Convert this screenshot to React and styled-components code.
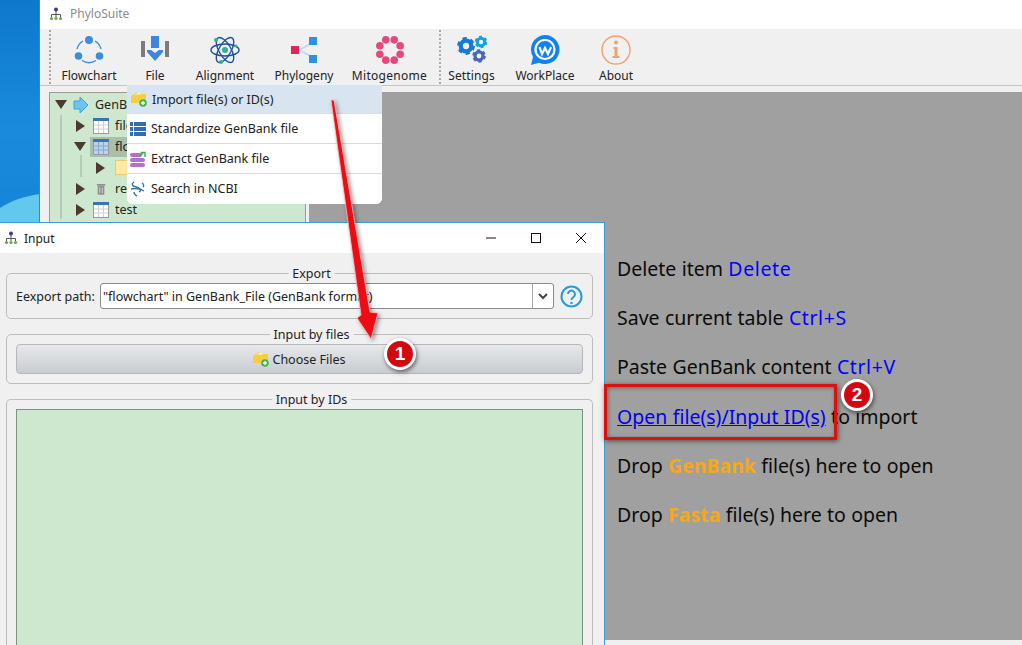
import React from "react";
import styled, { createGlobalStyle } from "styled-components";

const Global = createGlobalStyle`
  html, body { margin: 0; padding: 0; width: 1022px; height: 645px; overflow: hidden; background: #1a7fd0; }
  * { box-sizing: border-box; }
  body { font-family: "Noto Sans", "Open Sans", "Liberation Sans", sans-serif; }
`;

const Desktop = styled.div`
  position: relative; width: 1022px; height: 645px; overflow: hidden;
  background: linear-gradient(180deg, #0f78cc 0%, #1a8bdc 20%, #1585d8 32%, #2a9fe8 100%);
`;
const Wave = styled.svg`
  position: absolute; left: 0; top: 190px;
`;
const MainWindow = styled.div`
  position: absolute; left: 39px; top: 0; width: 983px; height: 645px;
  display: flex; flex-direction: column; background: #f0f0f0; border-left: 1px solid #5b7d9b;
`;
const TitleBar = styled.div`
  height: 29px; flex: none; background: #fff; display: flex; align-items: center;
  gap: 7px; padding: 0 0 2px 9px; font-size: 12px; color: #8a8a8a;
`;
const Toolbar = styled.div`
  height: 57px; flex: none; display: flex; background: #f0f0f0;
  border-bottom: 1px solid #c4c4c4; position: relative;
`;
const Grip = styled.div`
  flex: none; width: 2px; height: 54px; margin: 1px 0 0 ${p => p.$ml}px;
  background: repeating-linear-gradient(180deg, #a8a8a8 0 2px, transparent 2px 4px);
`;
const Tool = styled.div`
  flex: none; width: ${p => p.$w}px; display: flex; flex-direction: column; align-items: center;
  padding-top: 6px; font-size: 12px; color: #222; white-space: nowrap; line-height: 16px;
  letter-spacing: ${p => p.$ls || 0}px;
  svg { display: block; margin-bottom: 3px; height: 30px; }
`;
const Workspace = styled.div`
  flex: 1; display: flex; background: #f0f0f0; padding: 6px 0 5px 9px;
`;
const TreePanel = styled.div`
  width: 257px; height: 140px; flex: none; background-color: #cde8cf; border: 1px solid #9a9a9a;
  margin-right: 3px; padding-top: 1px; font-size: 12.5px; color: #222;
  background-image: linear-gradient(#b5c9b7, #b5c9b7), linear-gradient(#b5c9b7, #b5c9b7);
  background-repeat: no-repeat;
  background-size: 2px 104px, 2px 22px;
  background-position: 10px 22px, 30px 62px;
`;
const TreeRow = styled.div`
  height: 21px; display: flex; align-items: center; padding-left: ${p => p.$indent}px; gap: ${p => p.$gap ?? 6}px; white-space: nowrap;
`;
const Selected = styled.span`
  display: flex; align-items: center; gap: 6px; background: #a8bfac; height: 20px; padding: 0 30px 0 3px; margin-left: -2px;
`;
const Arrow = styled.i`
  display: block; width: 0; height: 0; flex: none;
  ${p => p.$open
    ? "border-left: 6px solid transparent; border-right: 6px solid transparent; border-top: 9px solid #4d3a2d;"
    : "border-top: 6.500px solid transparent; border-bottom: 6.500px solid transparent; border-left: 9px solid #4d3a2d; margin: 0 2px 0 1px;"}
`;
const TrashSlot = styled.span`
  width: 16px; display: flex; justify-content: center; flex: none;
`;
const Note = styled.span`
  display: block; width: 16px; height: 15px; margin-left: 2px; background: #ffe9a0; border: 1px solid #e8c97a;
`;
const Stage = styled.div`
  flex: 1; background: #a0a0a0; position: relative;
`;
const Hints = styled.div`
  position: absolute; left: 308px; top: 164px; display: flex; flex-direction: column; gap: 23.2px;
  font-size: 19.500px; line-height: 26px; color: #0a0a0a; white-space: nowrap; word-spacing: 0.3px;
`;
const Key = styled.span` color: #0000ff; letter-spacing: 0.6px; `;
const HintLink = styled.span` color: #0000ee; text-decoration: underline; `;
const Accent = styled.b` color: #f5a81c; `;

const Menu = styled.div`
  position: absolute; left: 127px; top: 85px; width: 255px; height: 119px; background: #fff;
  border-radius: 0 0 6px 6px; font-size: 12.500px; color: #222; overflow: hidden;
`;
const MenuItem = styled.div`
  height: 30px; display: flex; align-items: center; gap: 5px; padding-left: ${p => p.$first ? 4 : 3}px;
  background: ${p => p.$active ? "#d8e5f1" : "#fff"};
  border-bottom: 1px solid ${p => p.$last ? "transparent" : "#dcdcdc"};
  ${p => p.$first && "height: 29px;"}
  svg { flex: none; }
`;

const Dialog = styled.div`
  position: absolute; left: 0; top: 222px; width: 605px; height: 423px;
  background: #f0f0f0; border: 1px solid #3f9ad6; border-left: none; border-bottom: none;
  display: flex; flex-direction: column;
`;
const DialogBar = styled.div`
  height: 30px; flex: none; background: #fff; display: flex; align-items: center; padding-left: 4px;
  gap: 6px; font-size: 12px; color: #222;
`;
const WinButtons = styled.div`
  margin-left: auto; display: flex; align-items: center; gap: 33px; padding-right: 17px; color: #111;
`;
const DialogBody = styled.div`
  flex: 1; padding: 20px 11px 0 6px; display: flex; flex-direction: column; gap: 15px;
`;
const Group = styled.div`
  border: 1px solid #bdbdbd; border-radius: 5px; padding: ${p => p.$pad}; position: relative;
  ${p => p.$grow ? "flex: 1; border-bottom: none; border-radius: 5px 5px 0 0;" : ""}
  ${p => p.$h ? `height: ${p.$h}px; flex: none;` : ""}
`;
const Legend = styled.span`
  position: absolute; top: -8px; left: calc(50% + 12px); transform: translateX(-50%); background: #f0f0f0;
  padding: 0 4px; font-size: 12.500px; line-height: 15px; color: #222; white-space: nowrap;
`;
const PathRow = styled.div` display: flex; align-items: center; font-size: 12.500px; color: #222; `;
const PathLabel = styled.span` width: 84px; flex: none; white-space: nowrap; `;
const Combo = styled.div`
  width: 455px; height: 26px; background: #fff; border: 1px solid #8a8a8a; border-radius: 3px;
  display: flex; align-items: center; padding-left: 2px; white-space: nowrap; overflow: hidden;
`;
const ComboText = styled.span` flex: 1; overflow: hidden; `;
const ComboArrow = styled.span`
  width: 21px; height: 100%; border-left: 1px solid #a8a8a8; display: flex; align-items: center; justify-content: center; flex: none;
`;
const HelpButton = styled.span` margin-left: 6px; display: flex; `;
const ChooseButton = styled.div`
  height: 30px; border: 1px solid #b4b8bc; border-radius: 4px;
  background: linear-gradient(180deg, #e6e8ea 0%, #c8ccd2 100%);
  display: flex; align-items: center; justify-content: center; gap: 3px; font-size: 12.500px; color: #222;
`;
const IdBox = styled.div`
  height: 100%; background: #cde8cf; border: 1px solid #7f8f80; border-bottom: none;
`;
const BottomStrip = styled.div`
  position: absolute; left: 605px; right: 0; top: 640px; height: 5px; background: #f0f0f0;
`;
const Overlay = styled.svg`
  position: absolute; left: 0; top: 0; pointer-events: none;
  filter: drop-shadow(2px 2px 2px rgba(0,0,0,.4));
`;
const Badge = styled.span`
  position: absolute; left: ${p => p.$x}px; top: ${p => p.$y}px; width: 32px; height: 32px; border-radius: 50%;
  background: #d4080f; border: 3px solid #fff; color: #fff; font: bold 19px/25px "Liberation Sans", sans-serif;
  text-align: center; box-shadow: 1px 2px 4px rgba(0,0,0,.55);
`;
const Callout = styled.div`
  position: absolute; left: 604px; top: 384px; width: 233px; height: 56px;
  border: 3px solid #dd1010; box-shadow: 1px 1px 5px rgba(0,0,0,.55), inset 1px 1px 4px rgba(0,0,0,.35);
`;

const Logo = () => (
  <svg width="14" height="14" viewBox="0 0 14 14">
    <circle cx="7" cy="2.4" r="2" fill="#3a3a8c" />
    <path d="M7 4v4M2.500 10V7.500h9V10M7 7.500V10" stroke="#555" strokeWidth="1" fill="none" />
    <circle cx="2.500" cy="11.500" r="1.600" fill="#6aa84f" />
    <circle cx="7" cy="11.500" r="1.600" fill="#6aa84f" />
    <circle cx="11.500" cy="11.500" r="1.600" fill="#6aa84f" />
  </svg>
);
const FlowIcon = () => (
  <svg width="30" height="30" viewBox="0 0 30 30">
    <path d="M9 6A13 13 0 0 0 3 14M21 6a13 13 0 0 1 6 8M8 25.500a13 13 0 0 0 14 0" fill="none" stroke="#3a8ee0" strokeWidth="1.400" />
    <circle cx="15" cy="5" r="4" fill="#3a8ee0" /><circle cx="4.500" cy="21" r="3.800" fill="#3a8ee0" /><circle cx="25.500" cy="21" r="3.800" fill="#3a8ee0" />
  </svg>
);
const FileIcon = () => (
  <svg width="30" height="30" viewBox="0 0 30 30">
    <rect x="1" y="6" width="4" height="16" fill="#7b7b7b" /><rect x="25" y="6" width="4" height="16" fill="#7b7b7b" />
    <rect x="11" y="1" width="8" height="12" fill="#3a86e0" />
    <path d="M7 15h4l4 3 4-3h4v2l-8 9-8-9z" fill="#3a86e0" />
  </svg>
);
const AtomIcon = () => (
  <svg width="30" height="30" viewBox="0 0 30 30" fill="none" stroke="#1e4f9c" strokeWidth="1.400">
    <ellipse cx="15" cy="15" rx="14" ry="6" /><ellipse cx="15" cy="15" rx="14" ry="6" transform="rotate(60 15 15)" /><ellipse cx="15" cy="15" rx="14" ry="6" transform="rotate(120 15 15)" />
    <circle cx="15" cy="15" r="3" fill="#28b48c" stroke="none" /><circle cx="6" cy="5" r="2" fill="#28b48c" stroke="none" /><circle cx="26" cy="11" r="1.600" fill="#28b48c" stroke="none" /><circle cx="11" cy="27" r="2" fill="#28b48c" stroke="none" />
  </svg>
);
const PhyloIcon = () => (
  <svg width="30" height="30" viewBox="0 0 30 30">
    <path d="M9 15L24 6v3L12 15l12 6v3z" fill="#bcdcf5" />
    <rect x="2" y="11" width="8" height="8" fill="#e0245e" /><rect x="20" y="2" width="8" height="8" fill="#2f8fe6" /><rect x="20" y="20" width="8" height="8" fill="#2f8fe6" />
  </svg>
);
const MitoIcon = () => (
  <svg width="30" height="30" viewBox="0 0 30 30" fill="#e5497c">
    {[0, 45, 90, 135, 180, 225, 270, 315].map(a => (
      <circle key={a} cx={15 + 11 * Math.cos((a + 22.5) * Math.PI / 180)} cy={15 + 11 * Math.sin((a + 22.5) * Math.PI / 180)} r="3.800" />
    ))}
  </svg>
);
const Gear = ({ cx, cy, r, color }) => (
  <g>
    <circle cx={cx} cy={cy} r={r * 0.62} fill="none" stroke={color} strokeWidth={r * 0.5} />
    <circle cx={cx} cy={cy} r={r * 0.9} fill="none" stroke={color} strokeWidth={r * 0.3} strokeDasharray={`${r * 0.5} ${r * 0.45}`} />
  </g>
);
const GearsIcon = () => (
  <svg width="30" height="30" viewBox="0 0 30 30">
    <Gear cx={9} cy={11} r={8.500} color="#1679d6" /><Gear cx={24} cy={7} r={6} color="#17a2d8" /><Gear cx={22} cy={21} r={6.500} color="#4a67b8" />
  </svg>
);
const WorkIcon = () => (
  <svg width="30" height="30" viewBox="0 0 30 30">
    <path d="M15 0a14.500 14.500 0 1 1-6 27.700L1 30l2-8A14.500 14.500 0 0 1 15 0z" fill="#1282f0" />
    <circle cx="15" cy="14.500" r="9.500" fill="none" stroke="#fff" strokeWidth="2.200" />
    <path d="M9.500 12l2.500 7 3-6 3 6 3-7" fill="none" stroke="#fff" strokeWidth="2.200" />
  </svg>
);
const InfoIcon = () => (
  <svg width="30" height="30" viewBox="0 0 30 30">
    <circle cx="15" cy="15" r="14" fill="none" stroke="#f3a070" strokeWidth="1.400" />
    <circle cx="15" cy="7.500" r="2" fill="#f3a070" />
    <path d="M12.500 12h4v9h2v2h-7v-2h2v-7h-1z" fill="#f3a070" />
  </svg>
);
const Folder = () => (
  <svg width="16" height="16" viewBox="0 0 16 16">
    <path d="M0 5l6-4 1.500 2H15v9H0z" fill="#f4cf45" />
    <path d="M3 3.500l5-2 2 2z" fill="#fff6c8" />
    <circle cx="12" cy="12" r="3.800" fill="#47b54a" /><path d="M12 10v4M10 12h4" stroke="#fff" strokeWidth="1.300" />
  </svg>
);
const ListIcon = () => (
  <svg width="16" height="16" viewBox="0 0 16 16" fill="#2f6fb0">
    <rect x="0" y="1" width="3" height="4" /><rect x="4" y="1" width="12" height="4" />
    <rect x="0" y="6" width="3" height="4" /><rect x="4" y="6" width="12" height="4" />
    <rect x="0" y="11" width="3" height="4" /><rect x="4" y="11" width="12" height="4" />
  </svg>
);
const ExtractIcon = () => (
  <svg width="16" height="16" viewBox="0 0 16 16">
    <rect x="0" y="2" width="12" height="4" rx="2" fill="#b56fd0" /><rect x="0" y="7" width="15" height="4" rx="2" fill="#b56fd0" /><rect x="0" y="12" width="15" height="4" rx="2" fill="#b56fd0" />
    <path d="M9 6l4-4M10.500 1.500H15V6" stroke="#3cb45a" strokeWidth="1.500" fill="none" />
  </svg>
);
const NcbiIcon = () => (
  <svg width="16" height="16" viewBox="0 0 16 16" fill="none" stroke="#2a6fa8" strokeWidth="1.300">
    <path d="M4 1c-3 2-2 4 2 5s6 3 3 5" /><path d="M1 8c4-1 10 0 13 2M7 15c-2-1-3-2-3-4" /><path d="M12 2c2 1 2 3 1 4" />
  </svg>
);
const TableIcon = ({ active }) => (
  <svg width="16" height="16" viewBox="0 0 16 16">
    <rect x="0.500" y="0.500" width="15" height="15" fill={active ? "#b9d2ee" : "#fff"} stroke="#9a9a9a" />
    <rect x="0" y="0" width="16" height="3" fill="#3a72b4" />
    <path d="M5.500 3v12M10.500 3v12M1 7h14M1 11h14" stroke={active ? "#8aa8cc" : "#d0d0d0"} strokeWidth="1" />
  </svg>
);
const GenBankIcon = () => (
  <svg width="16" height="16" viewBox="0 0 16 16">
    <path d="M1 4h6V0l8 8-8 8v-4H1z" fill="#6cc4ef" stroke="#3da2dc" />
  </svg>
);
const Trash = () => (
  <svg width="10" height="14" viewBox="0 0 12 14">
    <rect x="2" y="3" width="8" height="11" rx="1" fill="#8f8f8f" /><rect x="1" y="1" width="10" height="2" fill="#8f8f8f" />
    <path d="M4.500 5v7M7.500 5v7" stroke="#ddd" />
  </svg>
);

const tools1 = [
  ["Flowchart", 76, <FlowIcon />, 0], ["File", 56, <FileIcon />, 0], ["Alignment", 84, <AtomIcon />, 0],
  ["Phylogeny", 74, <PhyloIcon />, 0], ["Mitogenome", 97, <MitoIcon />, 0.3],
];
const tools2 = [["Settings", 61, <GearsIcon />, 0.1], ["WorkPlace", 86, <WorkIcon />, 0], ["About", 56, <InfoIcon />, 0]];

export default function App() {
  return (
    <Desktop>
      <Global />
      <Wave width="40" height="32" viewBox="0 0 40 32"><path d="M0 18C12 10 26 6 40 4V32H0z" fill="#62c8ee" /></Wave>
      <MainWindow>
        <TitleBar><Logo />PhyloSuite</TitleBar>
        <Toolbar>
          <Grip $ml={9} />
          {tools1.map(([t, w, i, l]) => <Tool key={t} $w={w} $ls={l}>{i}{t}</Tool>)}
          <Grip $ml={1} />
          {tools2.map(([t, w, i, l]) => <Tool key={t} $w={w} $ls={l}>{i}{t}</Tool>)}
        </Toolbar>
        <Workspace>
          <TreePanel>
            <TreeRow $indent={5}><Arrow $open /><GenBankIcon />GenBank_File</TreeRow>
            <TreeRow $indent={25} $gap={6}><Arrow /><TableIcon />files</TreeRow>
            <TreeRow $indent={24}><Arrow $open /><Selected><TableIcon active />flowchart</Selected></TreeRow>
            <TreeRow $indent={45}><Arrow /><Note /></TreeRow>
            <TreeRow $indent={25}><Arrow /><TrashSlot><Trash /></TrashSlot>recycled</TreeRow>
            <TreeRow $indent={25}><Arrow /><TableIcon />test</TreeRow>
          </TreePanel>
          <Stage>
            <Hints>
              <span>Delete item <Key>Delete</Key></span>
              <span>Save current table <Key>Ctrl+S</Key></span>
              <span>Paste GenBank content <Key>Ctrl+V</Key></span>
              <span><HintLink>Open file(s)/Input ID(s)</HintLink> to import</span>
              <span>Drop <Accent>GenBank</Accent> file(s) here to open</span>
              <span>Drop <Accent>Fasta</Accent> file(s) here to open</span>
            </Hints>
          </Stage>
        </Workspace>
      </MainWindow>

      <Menu>
        <MenuItem $active $first><Folder />Import file(s) or ID(s)</MenuItem>
        <MenuItem><ListIcon />Standardize GenBank file</MenuItem>
        <MenuItem><ExtractIcon />Extract GenBank file</MenuItem>
        <MenuItem $last><NcbiIcon />Search in NCBI</MenuItem>
      </Menu>

      <BottomStrip />

      <Dialog>
        <DialogBar>
          <Logo />Input
          <WinButtons>
            <svg width="12" height="12" viewBox="0 0 12 12"><path d="M1 6h10" stroke="#111" /></svg>
            <svg width="12" height="12" viewBox="0 0 12 12"><rect x="1.500" y="1.500" width="9" height="9" fill="none" stroke="#111" /></svg>
            <svg width="12" height="12" viewBox="0 0 12 12"><path d="M1 1l10 10M11 1L1 11" stroke="#111" /></svg>
          </WinButtons>
        </DialogBar>
        <DialogBody>
          <Group $pad="9px 9px 0" $h={46}>
            <Legend>Export</Legend>
            <PathRow>
              <PathLabel>Eexport path:</PathLabel>
              <Combo>
                <ComboText>"flowchart" in GenBank_File (GenBank format)</ComboText>
                <ComboArrow>
                  <svg width="10" height="7" viewBox="0 0 10 7"><path d="M1 1l4 4 4-4" fill="none" stroke="#444" strokeWidth="2" /></svg>
                </ComboArrow>
              </Combo>
              <HelpButton>
                <svg width="23" height="23" viewBox="0 0 23 23">
                  <circle cx="11.500" cy="11.500" r="10" fill="none" stroke="#2a9ad8" strokeWidth="2" />
                  <path d="M8 9a3.500 3.500 0 1 1 5.500 3c-1.500 1-2 1.500-2 3" fill="none" stroke="#2a9ad8" strokeWidth="2" />
                  <circle cx="11.500" cy="18" r="1.300" fill="#2a9ad8" />
                </svg>
              </HelpButton>
            </PathRow>
          </Group>
          <Group $pad="9px 9px 0" $h={50}>
            <Legend>Input by files</Legend>
            <ChooseButton><Folder />Choose Files</ChooseButton>
          </Group>
          <Group $pad="9px 9px 0" $grow>
            <Legend>Input by IDs</Legend>
            <IdBox />
          </Group>
        </DialogBody>
      </Dialog>

      <Callout />
      <Overlay width="1022" height="645" viewBox="0 0 1022 645">
        <path d="M331 100L334 100L370 312l8 1-7 26-14-21 4-3z" fill="#ee0c14" stroke="#f8c8c8" strokeWidth="0.8" strokeLinejoin="round" />
      </Overlay>
      <Badge $x={384} $y={338}>1</Badge>
      <Badge $x={841} $y={379}>2</Badge>
    </Desktop>
  );
}
